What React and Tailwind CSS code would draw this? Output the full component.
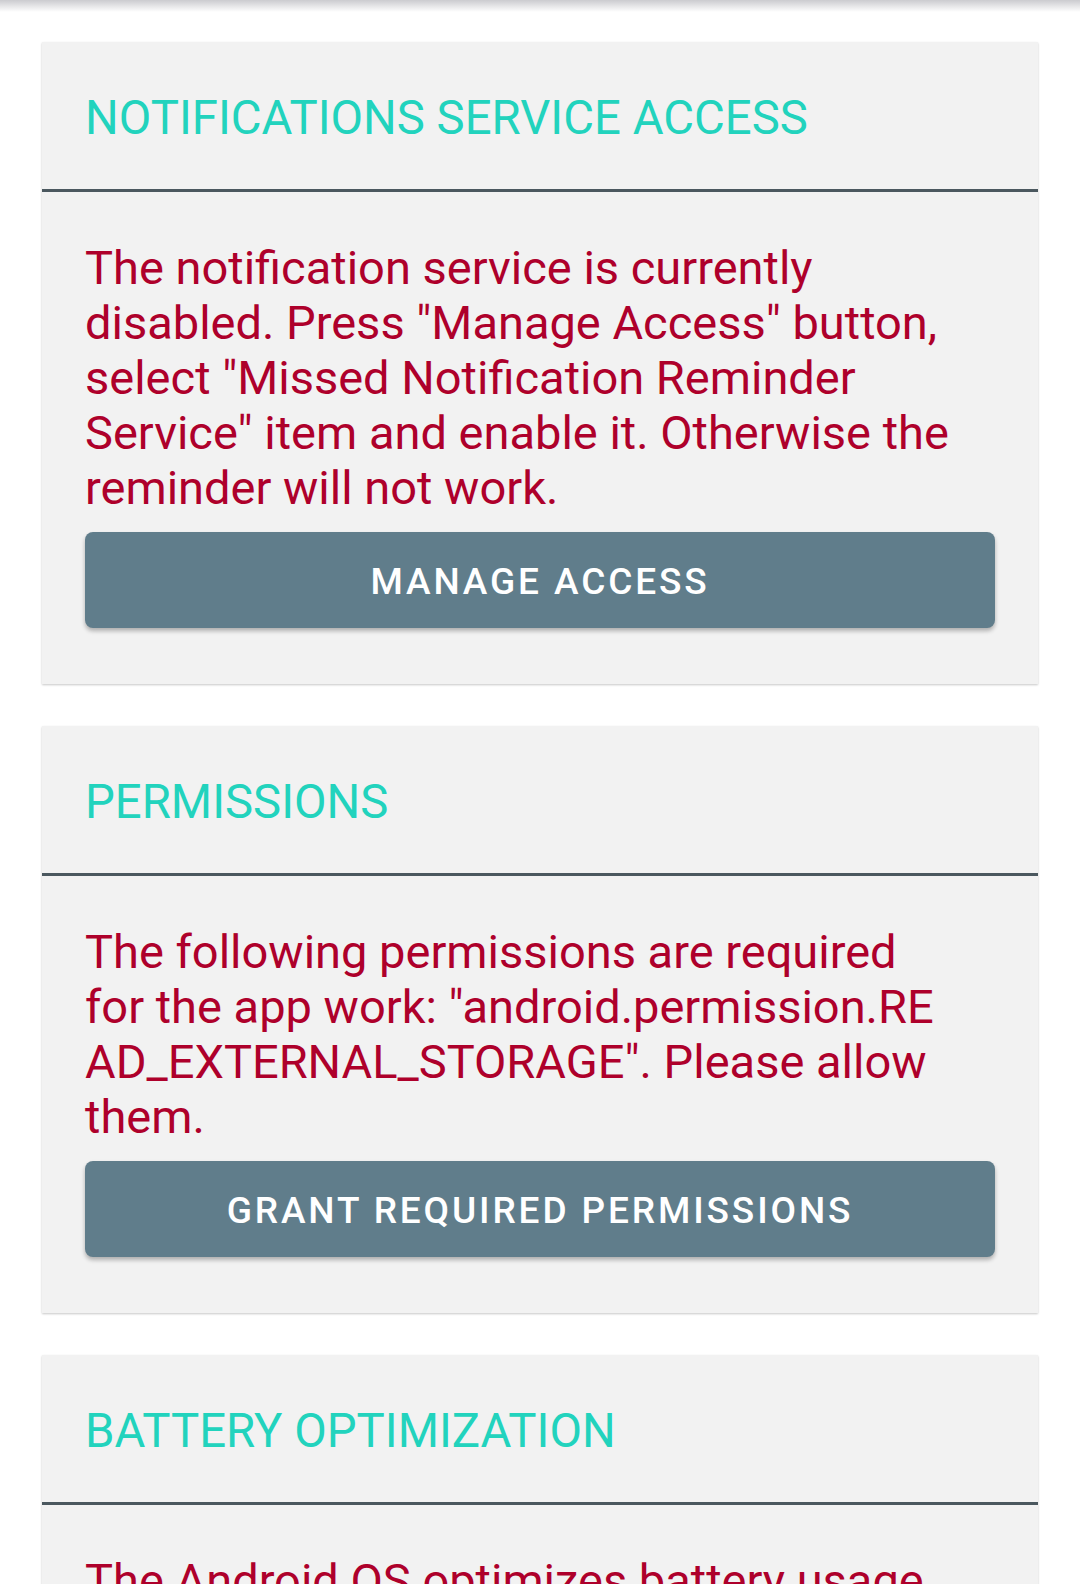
import React from "react";

const font = { fontFamily: "Roboto, 'Noto Sans', sans-serif" };

function Card({ title, lines, button }) {
  return (
    <div className="bg-[#f2f2f2] shadow-[0_1px_2px_rgba(0,0,0,0.22)]">
      <div className="px-[43px] pt-[48px] pb-[43px]">
        <div className="text-[47.3px] leading-[56px] text-[#22d3bd] whitespace-nowrap">{title}</div>
      </div>
      <div className="h-[3px] bg-[#4b585f]" />
      <div className="px-[43px] pt-[48px] pb-[56px]">
        <div className="text-[47px] leading-[55px] text-[#ae002b]">
          {lines.map((l, i) => (
            <div key={i} className="whitespace-nowrap">{l}</div>
          ))}
        </div>
        {button && (
          <div className="mt-[17px] h-[96px] pt-[3px] rounded-[8px] bg-[#607d8b] shadow-[0_3px_4px_rgba(0,0,0,0.28)] flex items-center justify-center">
            <span className="text-white font-medium text-[37px] tracking-[0.078em] whitespace-nowrap">{button}</span>
          </div>
        )}
      </div>
    </div>
  );
}

export default function App() {
  return (
    <div className="relative h-[1584px] w-[1080px] overflow-hidden bg-white" style={font}>
      <div className="absolute top-0 left-0 right-0 h-[12px] bg-linear-to-b from-[#cbcbcf] to-transparent" />
      <div className="px-[42px] pt-[42px] flex flex-col gap-[42px]">
        <Card
          title="NOTIFICATIONS SERVICE ACCESS"
          lines={[
            "The notification service is currently",
            'disabled. Press "Manage Access" button,',
            'select "Missed Notification Reminder',
            'Service" item and enable it. Otherwise the',
            "reminder will not work.",
          ]}
          button="MANAGE ACCESS"
        />
        <Card
          title="PERMISSIONS"
          lines={[
            "The following permissions are required",
            'for the app work: "android.permission.RE',
            'AD_EXTERNAL_STORAGE". Please allow',
            "them.",
          ]}
          button="GRANT REQUIRED PERMISSIONS"
        />
        <Card
          title="BATTERY OPTIMIZATION"
          lines={[
            "The Android OS optimizes battery usage",
            "and may stop the reminder service in the",
            "background. Please disable battery",
            "optimization for the app.",
          ]}
          button="DISABLE BATTERY OPTIMIZATION"
        />
      </div>
    </div>
  );
}
